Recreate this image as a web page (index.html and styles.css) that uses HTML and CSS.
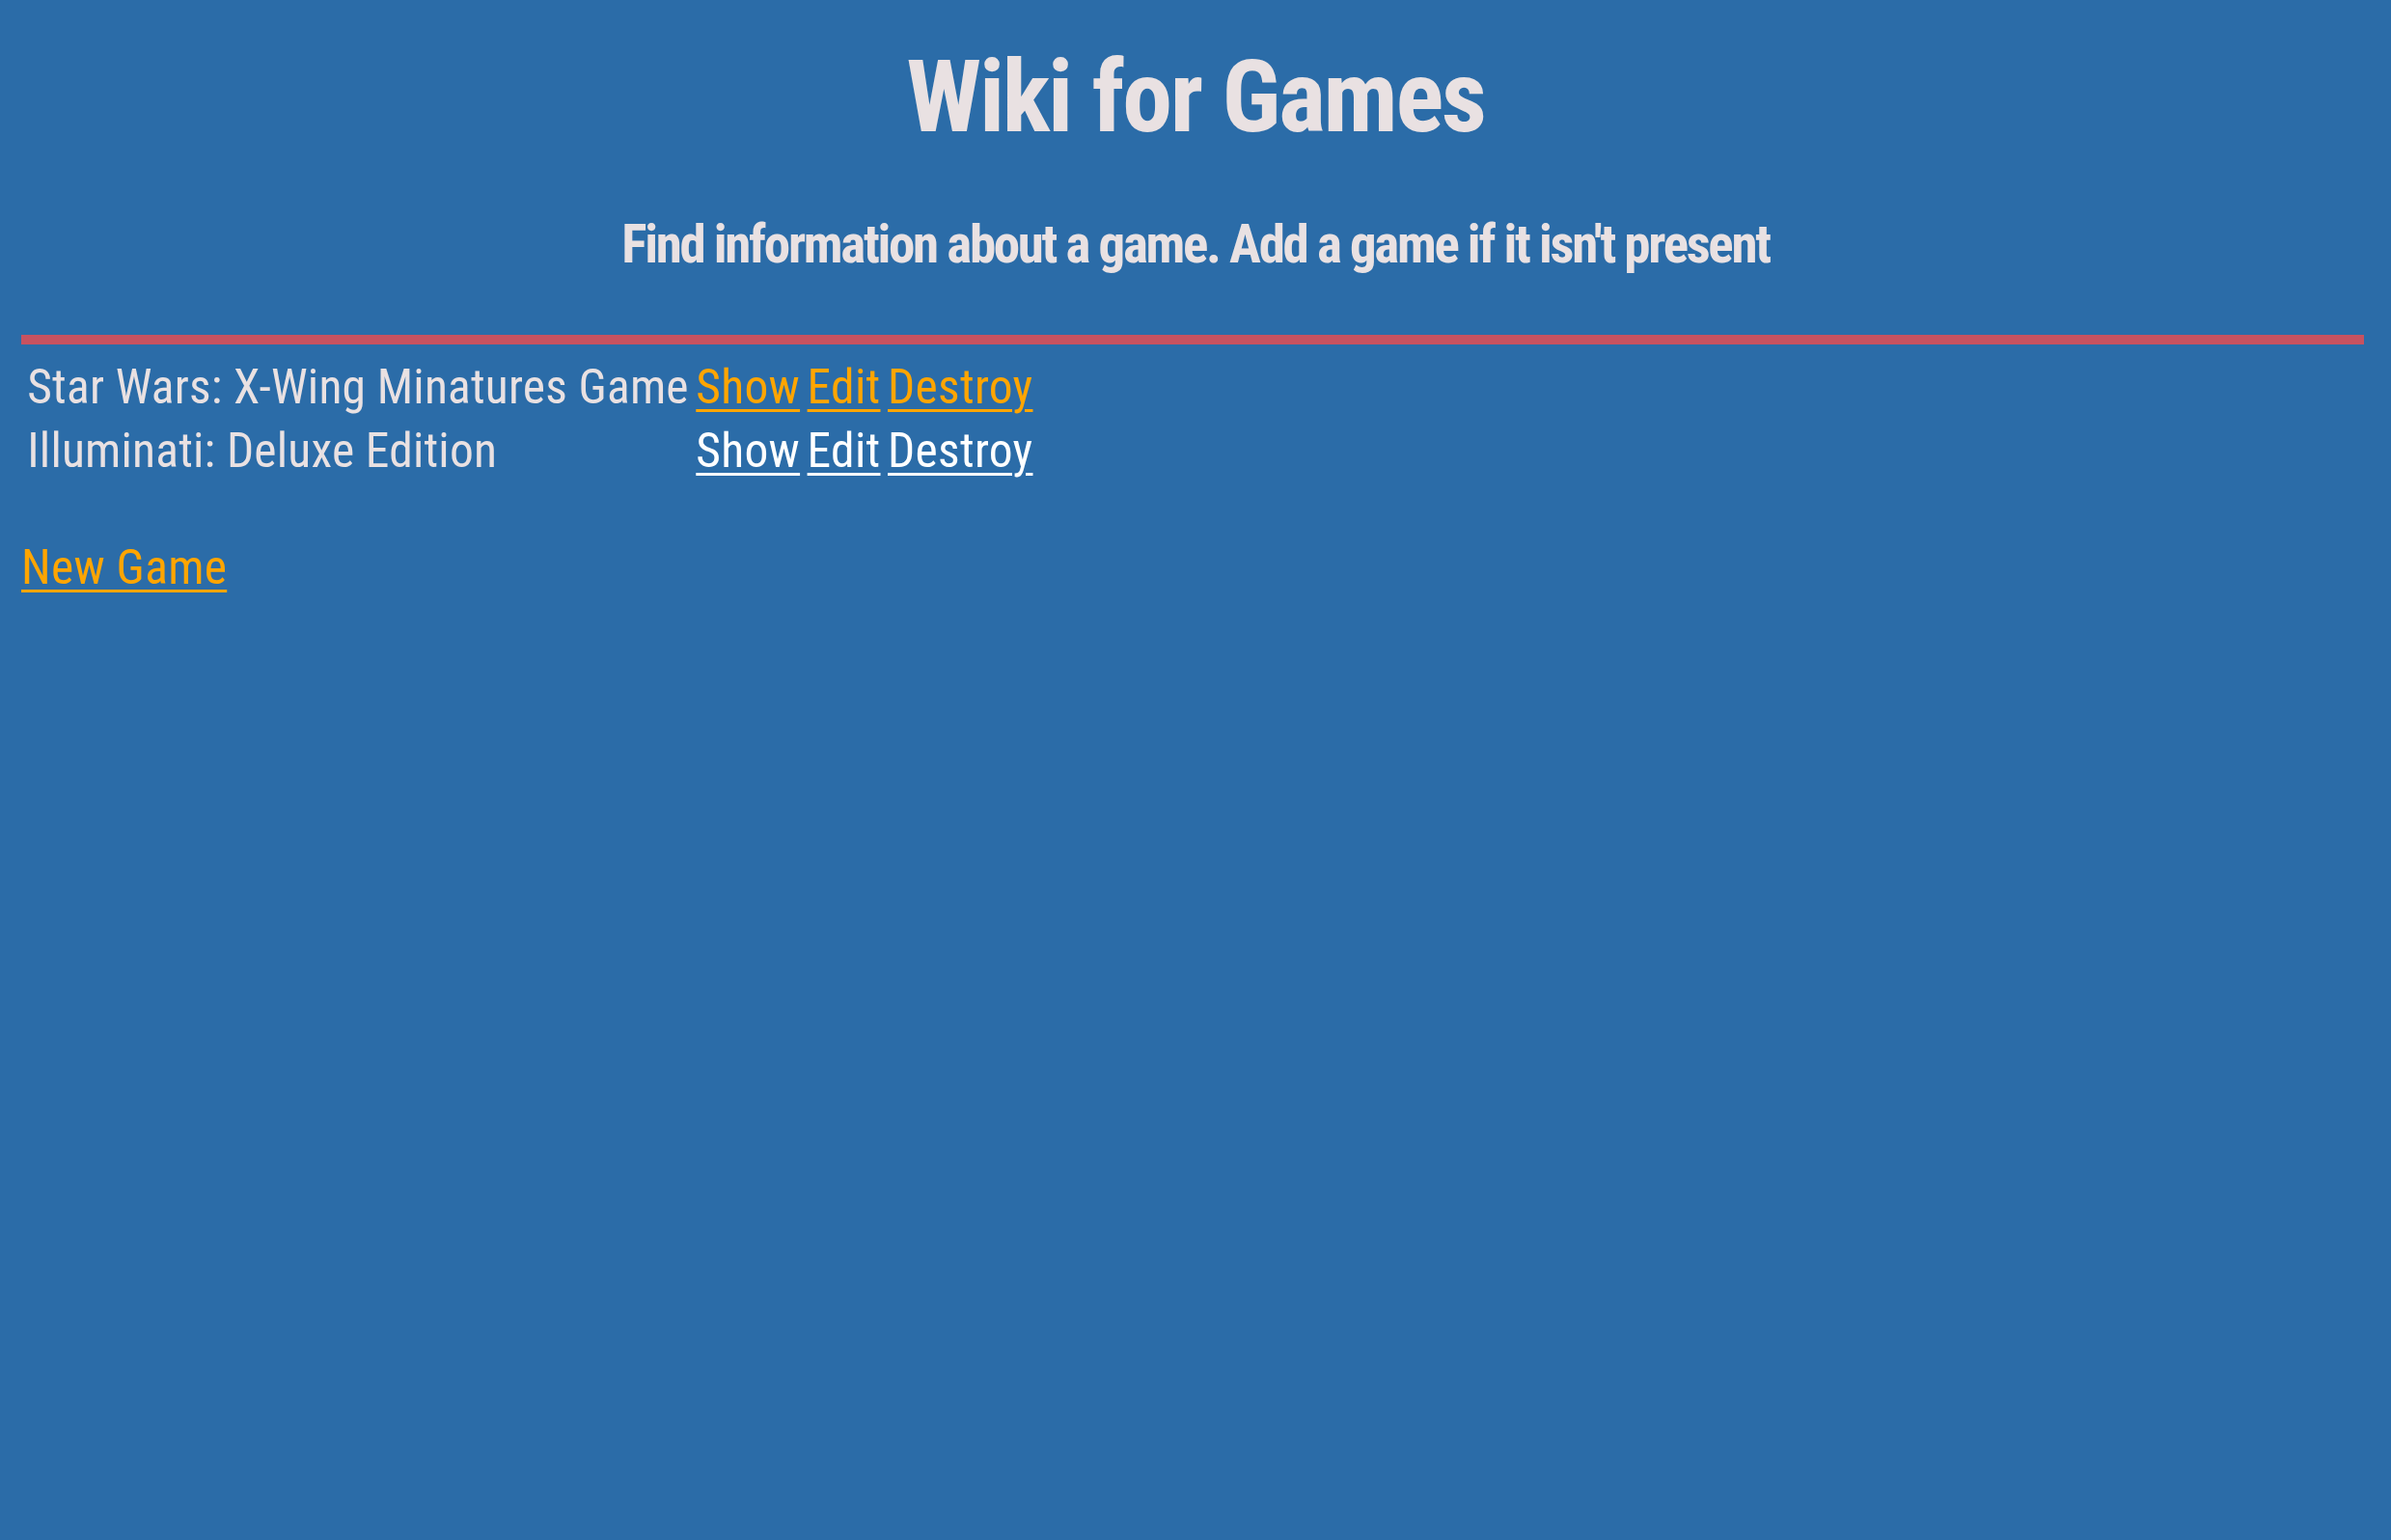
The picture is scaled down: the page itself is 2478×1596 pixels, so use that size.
FILE: index.html
```html
<!DOCTYPE html>
<html lang="en">
<head>
<meta charset="utf-8">
<title>Wiki for Games</title>
<link rel="stylesheet" href="styles.css">
</head>
<body>
<div class="page">
  <header class="header">
    <h1 class="title">Wiki for Games</h1>
    <h3 class="subtitle">Find information about a game. Add a game if it isn't present</h3>
  </header>
  <hr class="rule">
  <table class="games">
    <tbody>
      <tr>
        <td class="name">Star Wars: X-Wing Minatures Game</td>
        <td><a class="link active" href="#">Show</a></td>
        <td><a class="link active" href="#">Edit</a></td>
        <td><a class="link active" href="#">Destroy</a></td>
      </tr>
      <tr>
        <td class="name">Illuminati: Deluxe Edition</td>
        <td><a class="link" href="#">Show</a></td>
        <td><a class="link" href="#">Edit</a></td>
        <td><a class="link" href="#">Destroy</a></td>
      </tr>
    </tbody>
  </table>
  <p class="new"><a class="link active" href="#">New Game</a></p>
</div>
</body>
</html>
```

FILE: styles.css
```css
html, body {
  margin: 0;
  padding: 0;
  background: #2b6ca8;
}

body {
  font-family: "Roboto Condensed", "Roboto", "Liberation Sans", sans-serif;
  font-stretch: 75%;
  color: #e9e1e2;
}

.page {
  padding: 0 22px;
}

.header {
  text-align: center;
  padding-top: 40px;
}

.title {
  margin: 0;
  font-size: 104px;
  font-weight: 700;
  letter-spacing: -2.35px;
  line-height: normal;
}

.subtitle {
  margin: 60px 0 0;
  font-size: 55px;
  font-weight: 700;
  letter-spacing: -2.3px;
  line-height: normal;
}

.rule {
  margin: 62px 6px 0 0;
  border: 0;
  height: 10px;
  background: #c75260;
}

.games {
  margin-top: 9px;
  border-collapse: separate;
  border-spacing: 5.5px;
  font-size: 49.5px;
  line-height: 58px;
}

.games td {
  padding: 1.25px;
  white-space: nowrap;
}

.name {
  letter-spacing: 0.2px;
}

.link {
  color: #ffffff;
  letter-spacing: 0.3px;
  text-decoration: underline;
  text-decoration-thickness: 3px;
  text-underline-offset: 6px;
}

.link.active {
  color: #ffa500;
}

.new {
  margin: 57px 0 0;
  font-size: 49.5px;
  line-height: normal;
}
```
